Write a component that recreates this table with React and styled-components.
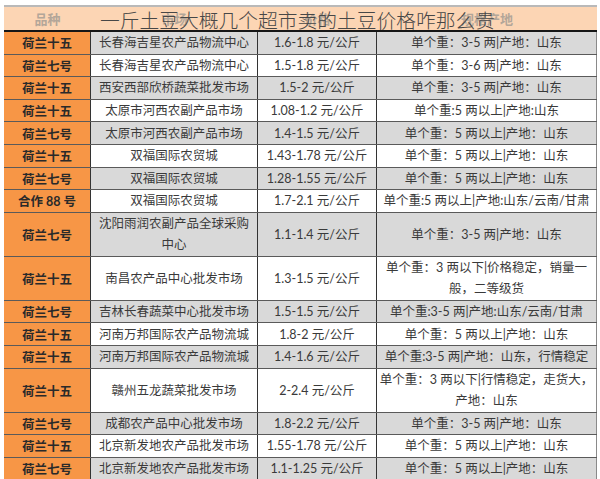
import React from "react";
import styled, { createGlobalStyle } from "styled-components";

const rows = [
    ["荷兰十五", "长春海吉星农产品物流中心", "1.6-1.8 元/公斤", "单个重：3-5 两|产地：山东"],
    ["荷兰七号", "长春海吉星农产品物流中心", "1.5-1.8 元/公斤", "单个重：3-6 两|产地：山东"],
    ["荷兰十五", "西安西部欣桥蔬菜批发市场", "1.5-2 元/公斤", "单个重：3-5 两|产地：山东"],
    ["荷兰十五", "太原市河西农副产品市场", "1.08-1.2 元/公斤", "单个重:5 两以上|产地:山东"],
    ["荷兰七号", "太原市河西农副产品市场", "1.4-1.5 元/公斤", "单个重：5 两以上|产地：山东"],
    ["荷兰十五", "双福国际农贸城", "1.43-1.78 元/公斤", "单个重：5 两以上|产地：山东"],
    ["荷兰七号", "双福国际农贸城", "1.28-1.55 元/公斤", "单个重：5 两以上|产地：山东"],
    ["合作 88 号", "双福国际农贸城", "1.7-2.1 元/公斤", "单个重:5 两以上|产地:山东/云南/甘肃"],
    ["荷兰七号", "沈阳雨润农副产品全球采购\n中心", "1.1-1.4 元/公斤", "单个重：3-5 两|产地：山东", true],
    ["荷兰十五", "南昌农产品中心批发市场", "1.3-1.5 元/公斤", "单个重：3 两以下|价格稳定，销量一\n般，二等级货", true],
    ["荷兰七号", "吉林长春蔬菜中心批发市场", "1.5-1.5 元/公斤", "单个重:3-5 两|产地:山东/云南/甘肃"],
    ["荷兰十五", "河南万邦国际农产品物流城", "1.8-2 元/公斤", "单个重：5 两以上|产地：山东"],
    ["荷兰十五", "河南万邦国际农产品物流城", "1.4-1.6 元/公斤", "单个重:3-5 两|产地：山东，行情稳定"],
    ["荷兰十五", "赣州五龙蔬菜批发市场", "2-2.4 元/公斤", "单个重：3 两以下|行情稳定，走货大，\n产地：山东", true],
    ["荷兰七号", "成都农产品中心批发市场", "1.8-2.2 元/公斤", "单个重：3-5 两|产地：山东"],
    ["荷兰十五", "北京新发地农产品批发市场", "1.55-1.78 元/公斤", "单个重：5 两以上|产地：山东"],
    ["荷兰七号", "北京新发地农产品批发市场", "1.1-1.25 元/公斤", "单个重：5 两以上|产地：山东"],
];

function App() {
    return (
        <Page>
            <GlobalStyle />
            <Table>
                <HeadRow>
                    <HeadCell>品种</HeadCell>
                    <HeadCell>市场</HeadCell>
                    <HeadCell>价格</HeadCell>
                    <HeadCell>规格产地</HeadCell>
                    <Title>一斤土豆大概几个超市卖的土豆价格咋那么贵</Title>
                </HeadRow>
                {rows.map(([kind, market, price, spec, tall], i) => (
                    <Row key={i} $tall={tall}>
                        <KindCell>{kind}</KindCell>
                        <Cell $grey={i % 2 === 0}>{market}</Cell>
                        <Cell $grey={i % 2 === 0}>{price}</Cell>
                        <Cell $grey={i % 2 === 0} $last>{spec}</Cell>
                    </Row>
                ))}
            </Table>
        </Page>
    );
}

const GlobalStyle = createGlobalStyle`
    html, body {
        margin: 0;
        padding: 0;
        background: #ffffff;
    }
    body {
        font-family: "Lato", "Noto Sans CJK SC", sans-serif;
        color: #333333;
    }
`;

const Page = styled.div`
    width: 600px;
    height: 479px;
    overflow: hidden;
    padding: 5px 3px 0 4px;
    box-sizing: border-box;
`;

const Table = styled.div`
    display: flex;
    flex-direction: column;
    border-top: 2px solid #b9b9b9;
`;

const columns = "87px 167px 119px 220px";

const HeadRow = styled.div`
    position: relative;
    display: grid;
    grid-template-columns: ${columns};
    height: 23px;
    background: #fcd5b4;
    border-bottom: 2px solid #161616;
`;

const HeadCell = styled.div`
    display: flex;
    align-items: center;
    justify-content: center;
    font-size: 13px;
    font-weight: 700;
    color: #b3a699;
`;

const Title = styled.div`
    position: absolute;
    left: 96px;
    top: 3px;
    font-family: "Noto Sans CJK SC", sans-serif;
    font-size: 19.75px;
    line-height: 20px;
    font-weight: 300;
    color: #474747;
    white-space: nowrap;
`;

const Row = styled.div`
    display: grid;
    grid-template-columns: ${columns};
    height: ${(p) => (p.$tall ? "44px" : "22.6px")};
    box-sizing: border-box;
    border-bottom: 1px solid #5a5a5a;
`;

const KindCell = styled.div`
    display: flex;
    align-items: center;
    justify-content: center;
    background: #f79646;
    border-right: 1px solid #333333;
    font-size: 12.5px;
    font-weight: 700;
    color: #2a2a2a;
`;

const Cell = styled.div`
    display: flex;
    align-items: center;
    justify-content: center;
    text-align: center;
    white-space: pre;
    background: ${(p) => (p.$grey ? "#d9d9d9" : "#ffffff")};
    border-right: 1px solid ${(p) => (p.$last ? "#8a8a8a" : "#333333")};
    font-size: 12.5px;
    line-height: 21px;
    color: #3a3a3a;
`;

export default App;
